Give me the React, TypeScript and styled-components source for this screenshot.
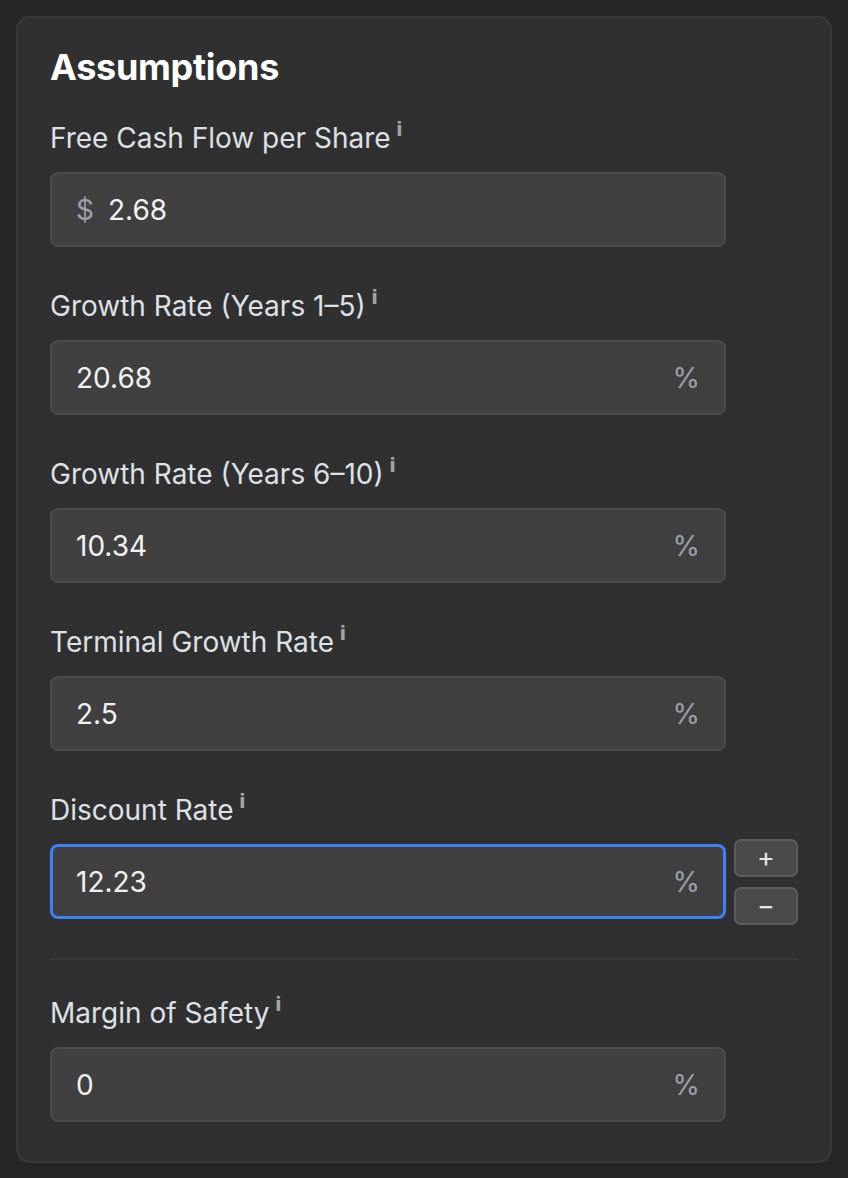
import styled, { createGlobalStyle } from 'styled-components';

const GlobalStyle = createGlobalStyle`
  html, body {
    margin: 0;
    padding: 0;
    background-color: #262626;
  }
  body {
    font-family: Inter, "Noto Sans", "Liberation Sans", sans-serif;
  }
`;

type Field = {
  label: string;
  value: string;
  prefix?: string;
  suffix?: string;
  focused?: boolean;
};

const fields: Field[] = [
  { label: 'Free Cash Flow per Share', value: '2.68', prefix: '$' },
  { label: 'Growth Rate (Years 1–5)', value: '20.68', suffix: '%' },
  { label: 'Growth Rate (Years 6–10)', value: '10.34', suffix: '%' },
  { label: 'Terminal Growth Rate', value: '2.5', suffix: '%' },
  { label: 'Discount Rate', value: '12.23', suffix: '%', focused: true },
];

const safety: Field = { label: 'Margin of Safety', value: '0', suffix: '%' };

function InputField({ field }: { field: Field }) {
  return (
    <FieldBlock>
      <Label>
        {field.label}
        <Info>i</Info>
      </Label>
      <Row>
        <InputBox $focused={field.focused}>
          {field.prefix ? <Prefix>{field.prefix}</Prefix> : null}
          <Value>{field.value}</Value>
          {field.suffix ? <Suffix>{field.suffix}</Suffix> : null}
        </InputBox>
        {field.focused ? (
          <Stepper>
            <StepButton>+</StepButton>
            <StepButton>−</StepButton>
          </Stepper>
        ) : null}
      </Row>
    </FieldBlock>
  );
}

function App() {
  return (
    <>
      <GlobalStyle />
      <Page>
        <Card>
          <Title>Assumptions</Title>
          <Fields>
            {fields.map((f) => (
              <InputField key={f.label} field={f} />
            ))}
          </Fields>
          <Divider />
          <InputField field={safety} />
        </Card>
      </Page>
    </>
  );
}

export default App;

const Page = styled.div`
  padding: 16px;
`;

const Card = styled.div`
  background-color: #303030;
  border: 2px solid #3a3a3a;
  border-radius: 14px;
  padding: 28px 32px 39px 32px;
`;

const Title = styled.h2`
  margin: 0 0 34px 0;
  font-size: 36px;
  line-height: 42px;
  font-weight: 700;
  color: #ffffff;
  letter-spacing: -0.3px;
`;

const Fields = styled.div`
  display: flex;
  flex-direction: column;
  gap: 43px;
`;

const FieldBlock = styled.div`
  display: flex;
  flex-direction: column;
  gap: 18px;
`;

const Label = styled.div`
  font-size: 28px;
  line-height: 32px;
  color: #dde1e6;
  display: flex;
  align-items: flex-start;
`;

const Info = styled.span`
  font-size: 20px;
  line-height: 20px;
  font-weight: 800;
  color: #a3a3a3;
  margin-left: 6px;
  margin-top: -3px;
`;

const Row = styled.div`
  display: grid;
  grid-template-columns: 1fr 64px;
  gap: 8px;
  align-items: center;
`;

const InputBox = styled.div<{ $focused?: boolean }>`
  box-sizing: border-box;
  height: 75px;
  display: flex;
  align-items: center;
  padding: 0 ${(p) => (p.$focused ? '23px' : '24px')};
  background-color: #404040;
  border: ${(p) => (p.$focused ? '3px solid #3b82f6' : '2px solid #4b4b4b')};
  border-radius: 8px;
  font-size: 28px;
`;

const Prefix = styled.span`
  color: #9aa1aa;
  margin-right: 14px;
`;

const Value = styled.span`
  color: #f2f2f2;
  flex: 1;
`;

const Suffix = styled.span`
  color: #9aa1aa;
`;

const Stepper = styled.div`
  display: flex;
  flex-direction: column;
  gap: 10px;
  margin: -6px 0;
`;

const StepButton = styled.button`
  box-sizing: border-box;
  height: 38px;
  width: 64px;
  padding: 0;
  background-color: #4a4a4a;
  border: 2px solid #5c5c5c;
  border-radius: 7px;
  color: #e6e6e6;
  font-family: Inter, "Noto Sans", sans-serif;
  font-size: 27px;
  line-height: 1;
  display: flex;
  align-items: center;
  justify-content: center;
`;

const Divider = styled.div`
  height: 2px;
  background-color: #3a3a3a;
  margin: 39px 0 37px 0;
`;
